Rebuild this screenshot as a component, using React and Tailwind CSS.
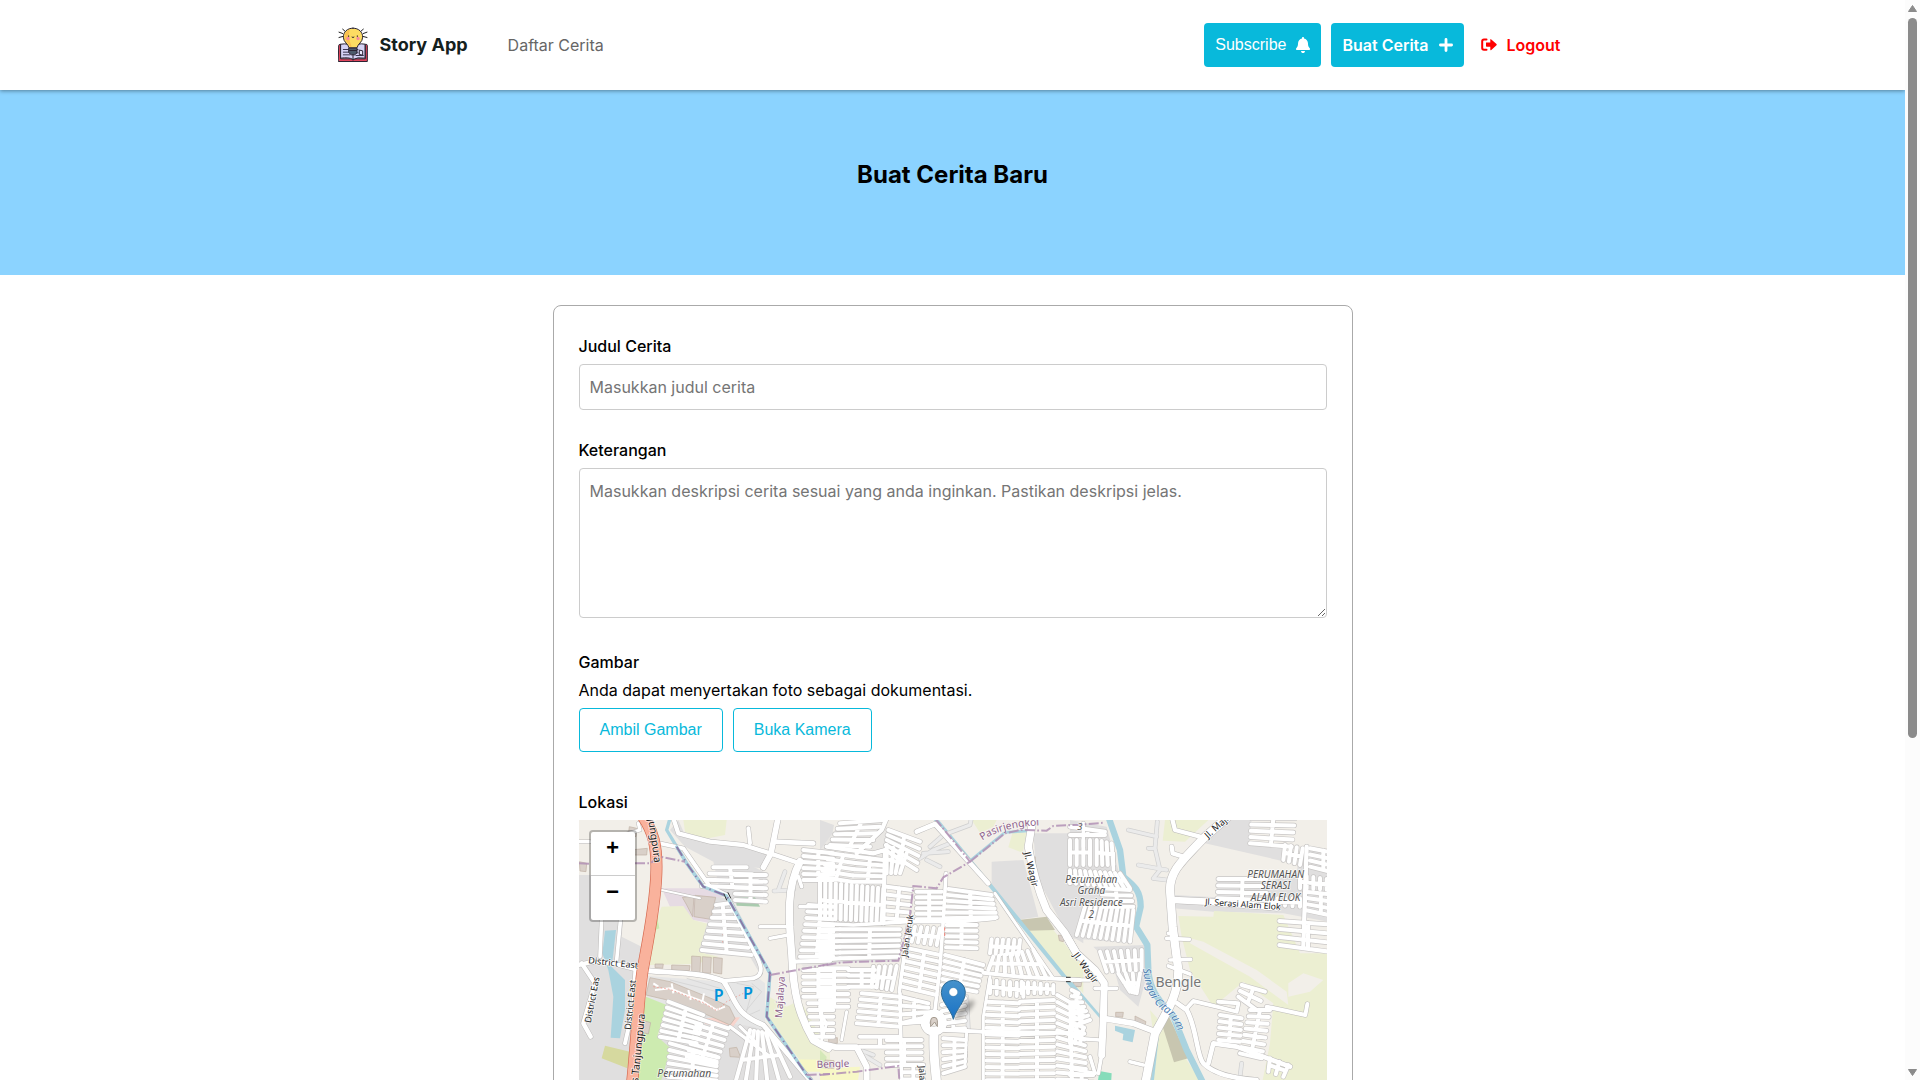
import React from "react";
import { FaBell } from "react-icons/fa6";

const INTER = "font-['Inter','Liberation_Sans',sans-serif]";
const ARIAL = "font-['Liberation_Sans',Arial,sans-serif]";

/* Map data. A block is [x1,y1, x2,y2, x3,y3, x4,y4, n]: n parallel streets
   running from the edge 1-2 to the edge 4-3, with a spine across the middle. */
const SECTIONS = [
  {
    ox: -27,
    areas: [
      ["#e0dfdf", "27,195 170,195 155,380 215,410 195,840 27,840"],
      ["#e0dfdf", "325,30 345,75 540,105 595,140 575,175 480,165 430,155 345,110 300,60"],
      ["#ecefd2", "340,30 470,30 465,75 400,88 345,65"],
      ["#e0dfdf", "430,155 530,160 590,190 590,280 500,285 450,240"],
      ["#e6dbe3", "275,235 400,235 465,255 435,275 425,340 370,330 330,290 300,290"],
      ["#ecefd2", "275,290 340,288 370,330 425,345 385,425 445,440 380,462 238,465 258,330"],
      ["#cdebb0", "262,325 268,355 252,362 256,330"],
      ["#e0dfdf", "435,262 485,265 575,440 575,500 540,440 410,432 388,420"],
      ["#e6e6e6", "235,498 460,515 560,500 585,520 585,640 700,790 720,840 470,840 480,650 300,640 230,560"],
      ["#e0dfdf", "290,565 480,640 550,650 600,670 720,800 720,900 260,900 270,680"],
      ["#cdebb0", "228,560 290,585 262,680 302,715 268,830 180,830 205,680"],
      ["#d6d99f", "105,707 180,725 172,775 95,745"],
      ["#ecefd2", "598,560 650,590 690,570 780,730 780,750 690,750 590,630"],
      ["#f7f7c6", "680,748 790,750 790,785 700,785"],
      ["#f8d4cc", "398,625 510,622 485,655 405,642"],
      ["#aacbaf", "497,263 555,262 570,290 500,287"],
      ["#aad3df", "105,362 138,360 130,430 125,470 165,510 165,600 150,685 122,683 130,560 115,480 97,430"],
      ["#e9e7e4", "700,120 790,130 790,470 700,470 660,420 665,250"],
    ],
    buildings: [
      "337,262 372,258 368,320 350,285",
      "375,256 437,262 422,328 372,320",
      "365,438 392,440 390,490 365,486",
      "397,440 424,442 422,490 397,488",
      "430,442 457,445 455,492 430,488",
      "305,465 360,467 358,482 305,480",
      "255,462 280,462 278,475 255,473",
      "240,503 300,515 440,572 478,590 495,625 480,645 420,618 300,572 228,555",
      "215,630 242,638 235,672 213,666",
      "178,50 200,55 198,80 175,75",
      "28,155 50,160 48,185 30,183",
      "180,120 232,115 230,135 185,135",
      "478,715 500,712 512,742 480,740",
    ],
    canals: [["M300,25 L290,60 320,110 350,160 400,230 470,255 600,490 590,620 710,795 760,850", 10]],
    roads: [
      ["M310,25 L325,70 420,95 520,105 600,130 690,160", 13],
      ["M625,20 L603,130 580,172", 17],
      ["M610,95 L730,100", 14],
      ["M540,100 L535,55", 12],
      ["M690,155 C650,230 655,320 665,430 C670,560 690,620 730,690 L775,715", 22],
      ["M232,482 C330,490 400,488 460,513 C500,570 490,610 580,645 L720,810", 15],
      ["M460,513 L550,505 C585,495 575,465 550,420 L470,255 420,230 385,180 340,115 270,100", 12],
      ["M27,95 L60,95", 10], ["M160,75 L210,60 205,40", 10],
      ["M95,325 L90,440", 11], ["M152,325 L140,450", 11],
      ["M27,465 L70,455 130,460 200,478", 13],
      ["M35,460 L75,520 40,640 62,680", 13],
      ["M196,480 L190,590 165,700", 12],
      ["M275,240 L390,265", 6],
      ["M570,350 L665,350 M600,385 L655,375", 10],
      ["M670,455 L780,452", 13],
      ["M695,230 L685,200 M690,290 L740,290", 11],
      ["M480,650 L600,740 M510,650 L560,700", 10],
    ],
    grayRoads: ["M612,243 L670,240 M625,240 L645,185"],
    blocks: [
      [430, 172, 395, 228, 580, 235, 530, 172, 4],
      [495, 195, 495, 270, 588, 275, 588, 195, 5],
      [438, 285, 395, 420, 545, 435, 478, 280, 8],
      [295, 575, 270, 680, 380, 700, 400, 615, 7],
      [385, 625, 350, 740, 440, 760, 475, 655, 7],
      [300, 700, 290, 840, 440, 840, 440, 740, 8],
      [600, 670, 540, 660, 490, 840, 660, 800, 6],
      [700, 120, 700, 210, 790, 210, 790, 130, 6],
      [715, 285, 690, 440, 790, 440, 790, 290, 9],
      [700, 480, 700, 560, 790, 560, 790, 480, 5],
      [715, 580, 725, 680, 790, 680, 790, 580, 6],
    ],
  },
  {
    ox: 723,
    areas: [
      ["#e0dfdf", "0,30 42,45 30,110 0,120"],
      ["#e9e7e4", "60,40 200,30 200,340 0,340 0,120"],
      ["#ecefd2", "455,30 530,30 520,50 480,68"],
      ["#ecefd2", "580,60 620,70 608,128 565,112"],
      ["#e0dfdf", "515,155 610,150 655,320 590,330 515,240"],
      ["#e0dfdf", "640,70 790,70 790,400 740,370 650,200"],
      ["#ecefd2", "600,345 700,360 790,470 790,550 740,500"],
      ["#c8c6b0", "595,330 680,320 705,360 622,362"],
      ["#e0dfdf", "0,350 230,350 230,455 0,460"],
      ["#f7f7c6", "0,775 120,770 110,840 0,840"],
      ["#d4e8b8", "0,720 20,740 15,775 0,775"],
    ],
    buildings: [
      "26,683 52,683 52,700 26,700",
      "15,750 42,752 42,775 15,775",
      "760,515 778,518 778,530 765,530",
      "645,140 650,200 640,190",
      "715,375 735,380 730,395 718,392",
    ],
    canals: [
      ["M345,25 L510,225 790,570", 12],
      ["M450,152 L555,67 640,62", 8],
    ],
    roads: [
      ["M290,65 L345,42 505,220", 14],
      ["M640,20 L625,110 C635,170 650,230 680,300 L735,370 775,440", 22],
      ["M267,330 L238,545", 11],
      ["M378,190 L370,330 360,470 345,600", 11],
      ["M525,250 L700,505", 9],
      ["M490,488 L600,500 780,510", 12],
      ["M510,500 L490,620 490,810", 9],
      ["M0,340 L100,345 265,335 420,335 525,325", 11],
      ["M110,130 L185,60 200,25 M20,110 L160,130 195,120 190,340", 13],
      ["M0,700 L50,712 110,712 140,770 140,830", 18],
      ["M250,640 L310,635 M375,660 L490,665 790,670", 12],
      ["M342,612 a26,26 0 1 1 -1,0 M342,665 C340,720 342,740 352,840", 27],
      ["M440,665 L435,765 M80,605 L65,690 M0,610 L20,640 5,690", 9],
      ["M240,550 L245,830", 11],
    ],
    grayRoads: [
      "M300,145 L340,120 390,100 M310,130 L385,125 M320,150 L360,170 M370,75 L450,45 455,20 M330,110 L370,75",
      "M130,735 L180,765 M120,720 L160,735",
      "M440,560 L445,660",
    ],
    blocks: [
      [385, 237, 375, 325, 530, 322, 515, 255, 6],
      [290, 245, 290, 328, 365, 328, 365, 245, 6],
      [60, 40, 30, 105, 150, 110, 190, 30, 5],
      [30, 130, 0, 200, 95, 215, 110, 140, 5],
      [110, 140, 95, 215, 190, 215, 190, 150, 5],
      [0, 215, 190, 235, 185, 335, 0, 325, 13],
      [205, 60, 195, 120, 290, 180, 300, 95, 5],
      [200, 105, 260, 130, 240, 190, 200, 190, 4],
      [200, 230, 195, 325, 265, 330, 275, 240, 5],
      [0, 358, 0, 450, 60, 445, 60, 358, 6],
      [60, 358, 60, 445, 235, 440, 240, 358, 6],
      [0, 475, 0, 590, 85, 590, 85, 475, 7],
      [85, 480, 85, 530, 165, 530, 165, 480, 4],
      [160, 470, 230, 468, 215, 540, 155, 530, 5],
      [285, 350, 360, 355, 350, 405, 275, 395, 5],
      [265, 415, 245, 530, 350, 555, 360, 435, 7],
      [380, 345, 378, 412, 470, 415, 470, 345, 5],
      [375, 435, 365, 525, 470, 545, 490, 465, 6],
      [515, 388, 600, 390, 595, 435, 510, 430, 6],
      [520, 440, 640, 420, 680, 505, 505, 480, 8],
      [510, 510, 610, 520, 610, 560, 510, 550, 6],
      [605, 515, 700, 525, 700, 550, 605, 550, 6],
      [500, 575, 500, 830, 595, 830, 597, 580, 14],
      [600, 575, 600, 830, 702, 830, 702, 570, 14],
      [712, 555, 712, 830, 800, 830, 790, 600, 14],
      [365, 585, 365, 660, 435, 655, 435, 565, 5],
      [370, 685, 370, 790, 435, 770, 437, 690, 6],
      [125, 550, 110, 640, 240, 650, 240, 560, 6],
      [240, 560, 240, 640, 325, 620, 325, 580, 4],
      [120, 680, 120, 710, 240, 710, 240, 680, 2],
      [200, 690, 200, 765, 305, 765, 305, 690, 5],
      [250, 765, 250, 830, 310, 830, 310, 765, 4],
    ],
  },
  {
    ox: 1473,
    areas: [
      ["#e0dfdf", "0,30 110,50 150,200 190,260 185,400 0,385"],
      ["#ecefd2", "285,30 415,30 345,95 278,92"],
      ["#e0dfdf", "475,30 545,30 540,95 640,110 690,165 405,100"],
      ["#e0dfdf", "440,205 590,215 680,190 690,110 800,130 800,340 640,310 430,305 310,295 310,255 440,262"],
      ["#ecefd2", "325,318 430,320 432,303 640,315 690,430 800,430 800,900 560,900 600,700 610,580 520,515 430,590 360,480 335,380"],
      ["#f2efe9", "360,385 400,395 560,480 650,545 655,585 540,500 360,400"],
      ["#f2efe9", "655,520 700,490 760,510 720,545 655,560"],
      ["#ecefd2", "240,600 275,640 350,750 410,840 240,840 250,670"],
      ["#ecefd2", "0,430 30,500 0,515"],
      ["#c8c6b0", "295,615 355,745 312,757 278,650"],
      ["#e0dfdf", "70,410 225,405 235,480 205,590 150,540 130,470"],
      ["#86dcba", "88,783 125,790 122,840 80,840"],
      ["#aad3df", "135,647 170,655 195,660 188,697 158,690 160,672 135,662"],
    ],
    buildings: [
      "137,607 160,607 158,622 137,620",
      "195,618 228,635 225,645 195,635",
      "10,515 35,517 33,530 12,528",
    ],
    canals: [
      ["M115,20 L150,120 160,200 C190,225 212,240 212,290 L198,350 232,405 235,480 C240,560 290,590 310,620 L350,720 405,830", 19],
      ["M0,515 L92,622", 8],
      ["M262,680 L245,830", 9],
    ],
    roads: [
      ["M480,15 L400,85 C340,150 300,180 300,240 L308,350 325,480 C325,550 300,590 255,670 L222,840", 25],
      ["M305,20 L315,60 390,80 M340,140 L308,130 305,110", 13],
      ["M310,270 L410,275 620,292", 20],
      ["M290,385 L358,388 M300,450 L362,448 M295,468 L360,492 M295,370 L310,370", 11],
      ["M322,580 L350,600 C380,650 380,740 400,760 C430,790 480,805 560,810", 14],
      ["M350,595 L370,573 440,590 500,605 505,580 445,575", 12],
      ["M590,590 L706,615 712,582", 12],
      ["M415,760 L430,700 500,710 660,770", 14],
      ["M-10,380 L20,430 75,480 103,520 100,625 95,735", 21],
      ["M100,625 L190,640 255,665", 17],
      ["M75,535 L140,535 M20,685 L90,690 M95,735 L85,790 M60,740 L75,790 M180,755 L220,765", 11],
      ["M0,775 L75,790 M0,510 L60,510", 10],
      ["M710,110 L700,410", 13],
      ["M40,40 L40,110 M130,130 L130,180", 11],
    ],
    grayRoads: [
      "M175,60 L260,80 M262,35 L255,115 235,115 M205,165 L290,180 M255,115 L270,180 250,205 290,210",
      "M515,760 L510,800",
    ],
    blocks: [
      [0, 50, 0, 75, 105, 75, 105, 65, 2],
      [0, 90, 60, 90, 60, 165, 0, 165, 4],
      [80, 90, 125, 100, 130, 165, 80, 165, 4],
      [0, 180, 150, 190, 180, 235, 0, 220, 11],
      [95, 235, 95, 290, 190, 290, 180, 240, 4],
      [45, 290, 190, 300, 180, 395, 20, 375, 10],
      [445, 207, 442, 265, 590, 270, 590, 207, 4],
      [545, 25, 540, 100, 665, 110, 675, 25, 5],
      [645, 105, 698, 115, 690, 165, 640, 150, 4],
      [720, 115, 720, 170, 800, 190, 800, 130, 4],
      [690, 195, 790, 210, 790, 240, 690, 235, 6],
      [705, 245, 705, 300, 800, 320, 800, 255, 4],
      [628, 333, 628, 405, 800, 428, 800, 345, 4],
      [600, 265, 690, 265, 690, 290, 600, 285, 5],
      [90, 425, 215, 420, 215, 480, 110, 485, 7],
      [145, 490, 210, 490, 200, 550, 180, 545, 4],
      [5, 540, 5, 650, 60, 630, 25, 550, 7],
      [515, 525, 505, 560, 560, 600, 585, 545, 3],
      [450, 615, 445, 690, 510, 695, 515, 625, 5],
      [540, 600, 510, 730, 575, 745, 600, 600, 8],
      [600, 745, 655, 765, 640, 800, 595, 785, 3],
      [0, 650, 40, 655, 30, 700, 0, 700, 3],
      [0, 795, 0, 840, 70, 840, 70, 795, 3],
    ],
  },
];

function blockPath([x1, y1, x2, y2, x3, y3, x4, y4, n]) {
  let d = "";
  for (let i = 0; i < n; i++) {
    const t = i / (n - 1);
    const ax = x1 + (x2 - x1) * t;
    const ay = y1 + (y2 - y1) * t;
    const bx = x4 + (x3 - x4) * t;
    const by = y4 + (y3 - y4) * t;
    d += `M${ax.toFixed(1)},${ay.toFixed(1)}L${bx.toFixed(1)},${by.toFixed(1)}`;
  }
  const mx = (x1 + x4) / 2;
  const my = (y1 + y4) / 2;
  const nx = (x2 + x3) / 2;
  const ny = (y2 + y3) / 2;
  return d + `M${mx},${my}L${nx},${ny}`;
}

function Layer({ children }) {
  return SECTIONS.map((s) => (
    <g key={s.ox} transform={`translate(${s.ox} -30)`}>
      {children(s)}
    </g>
  ));
}

function Label({ x, y, r = 0, size = 26, fill = "#222", italic, anchor = "start", children }) {
  return (
    <text
      transform={`translate(${x} ${y}) rotate(${r})`}
      fontSize={size}
      fill={fill}
      fontStyle={italic ? "italic" : "normal"}
      textAnchor={anchor}
      stroke="#fff"
      strokeOpacity="0.7"
      strokeWidth="5"
      paintOrder="stroke"
      strokeLinejoin="round"
    >
      {children}
    </text>
  );
}

const HIGHWAY = "M212,10 C250,60 262,110 259,190 C256,290 232,400 218,480 C205,560 200,700 182,860";
const BORDERS = [
  [-27, "M27,160 L100,163 M195,160 L240,160 270,140 345,155"],
  [-27, "M600,495 L680,480 780,462 M710,795 L780,792"],
  [723, "M345,25 L450,155 370,202 350,235 280,228 268,330 235,452 120,455 60,458 0,468"],
  [723, "M450,155 L555,70 600,60 680,62 700,48 780,44 855,38"],
  [723, "M0,795 L110,785 235,768 240,840"],
];

function StreetMap() {
  return (
    <svg
      role="img"
      aria-label="Peta lokasi"
      viewBox="0 0 2244 1200"
      preserveAspectRatio="xMidYMid slice"
      className="block h-full w-full font-['Noto_Sans',sans-serif]"
    >
      <defs>
        <linearGradient id="pin" x1="0" y1="0" x2="0" y2="1">
          <stop offset="0" stopColor="#4592cc" />
          <stop offset="1" stopColor="#1a72c4" />
        </linearGradient>
        <filter id="soft" x="-50%" y="-50%" width="200%" height="200%">
          <feGaussianBlur stdDeviation="7" />
        </filter>
        <path id="river-name" d="M1692,446 C1697,500 1715,550 1760,578 C1790,600 1798,630 1815,700" />
        <path id="village-name" d="M1210,62 C1250,35 1300,20 1380,16" />
      </defs>
      <rect width="2244" height="1200" fill="#f2efe9" />
      <Layer>{(s) => s.areas.map(([f, p], i) => <polygon key={i} points={p} fill={f} />)}</Layer>
      <Layer>
        {(s) => s.buildings.map((p, i) => <polygon key={i} points={p} fill="#d9d0c9" stroke="#c0b0a3" strokeWidth="2" />)}
      </Layer>
      <g transform="translate(-27 -30)" fill="none">
        <path d="M250,520 L265,530 M255,540 L300,535 360,560 400,575 440,600 465,590 M305,520 L310,550 M355,540 L362,570 M402,550 L396,580" stroke="#fff" strokeWidth="6" />
        <path d="M250,530 L300,538 360,562 400,578 440,602 470,575 520,550 M458,360 L458,405" stroke="#f3877c" strokeWidth="2" strokeDasharray="5 6" />
        <path d="M300,510 L440,545 M350,505 L450,535 M500,520 L550,530 525,620 570,600 M545,520 L575,545 530,600" stroke="#cfcfcf" strokeWidth="2" />
      </g>
      <Layer>
        {(s) => s.canals.map(([d, w], i) => <path key={i} d={d} fill="none" stroke="#aad3df" strokeWidth={w} strokeLinejoin="round" />)}
      </Layer>
      <g fill="none" strokeLinecap="round" strokeLinejoin="round">
        <Layer>
          {(s) => (
            <>
              {(s.grayRoads || []).map((d, i) => <path key={i} d={d} stroke="#cfcfcf" strokeWidth="14" />)}
              {(s.grayRoads || []).map((d, i) => <path key={`f${i}`} d={d} stroke="#ebebeb" strokeWidth="10" />)}
            </>
          )}
        </Layer>
        <Layer>{(s) => s.blocks.map((b, i) => <path key={i} d={blockPath(b)} stroke="#c8c6c5" strokeWidth="16" />)}</Layer>
        <Layer>{(s) => s.roads.map(([d, w], i) => <path key={i} d={d} stroke="#bbb9b8" strokeWidth={w + 3} />)}</Layer>
        <Layer>{(s) => s.blocks.map((b, i) => <path key={i} d={blockPath(b)} stroke="#fff" strokeWidth="12" />)}</Layer>
        <Layer>{(s) => s.roads.map(([d, w], i) => <path key={i} d={d} stroke="#fff" strokeWidth={w} />)}</Layer>
        <g transform="translate(-27 -30)">
          <path d={HIGHWAY} stroke="#d5694f" strokeWidth="36" />
          <path d={HIGHWAY} stroke="#f9b29c" strokeWidth="32" />
          <path d="M320,110 L350,160 400,230 470,258 600,490 590,620 710,795 760,850" stroke="#aad3df" strokeWidth="9" />
          <path d="M320,110 L350,160 400,230 470,258 600,490 590,620 710,795 760,850" stroke="#8a7ba8" strokeWidth="6" strokeDasharray="32 12 4 12" strokeLinecap="butt" />
          <path d="M462,252 L470,270 M474,248 L482,264" stroke="#333" strokeWidth="3" />
        </g>
      </g>
      <g fill="none" stroke="#b191b5" strokeOpacity="0.85" strokeWidth="6" strokeDasharray="30 7 5 7">
        {BORDERS.map(([ox, d], i) => <path key={i} transform={`translate(${ox} -30)`} d={d} />)}
      </g>
      <g transform="translate(723 -30)">
        <path d="M332,650 V632 a10,10 0 0 1 20,0 V650 l-8,-14 Z" fill="#d9d0c9" stroke="#a59b90" strokeWidth="3" />
        <path d="M374,352 V362 M374,368 V378" stroke="#f3877c" strokeWidth="3" />
        <path d="M738,502 H752 M738,515 H752" stroke="#333" strokeWidth="3" />
      </g>

      <g transform="translate(-27 -30)">
        <Label x={232} y={8} r={82} size={31}>njungpura</Label>
        <Label x={204} y={818} r={-84} size={31}>s Tanjungpura</Label>
        <Label x={54} y={460} r={6} size={27}>District East</Label>
        <Label x={62} y={640} r={-79} size={27}>District Eas</Label>
        <Label x={182} y={660} r={-84} size={27}>District East</Label>
        <Label x={262} y={802} size={31} italic fill="#555">Perumahan</Label>
        <Label x={636} y={625} r={-86} size={30} fill="#8d618b">Majalaya</Label>
        <text x="431" y="573" fontSize="48" fontWeight="600" fill="#0092da">P</text>
        <text x="519" y="567" fontSize="48" fontWeight="600" fill="#0092da">P</text>
      </g>
      <g transform="translate(723 -30)">
        <Label x={612} y={128} r={77} size={28}>Jl. Wagir</Label>
        <Label x={262} y={442} r={-82}>Jalan Jeruk</Label>
        <Label x={296} y={768} r={86}>Jalan Jeruk</Label>
        <Label x={-10} y={774} r={-2} size={30} fill="#8d618b">Bengle</Label>
      </g>
      <g transform="translate(1473 -30)">
        <Label x={64} y={218} size={30} italic fill="#555" anchor="middle">Perumahan</Label>
        <Label x={64} y={253} size={30} italic fill="#555" anchor="middle">Graha</Label>
        <Label x={64} y={289} size={30} italic fill="#555" anchor="middle">Asri Residence</Label>
        <Label x={64} y={325} size={30} italic fill="#555" anchor="middle">2</Label>
        <Label x={617} y={203} size={30} italic fill="#555" anchor="middle">PERUMAHAN</Label>
        <Label x={617} y={238} size={30} italic fill="#555" anchor="middle">SERASI</Label>
        <Label x={617} y={274} size={30} italic fill="#555" anchor="middle">ALAM ELOK</Label>
        <Label x={325} y={532} size={42} fill="#777" anchor="middle">Bengle</Label>
        <Label x={405} y={284} r={4}>Jl. Serasi Alam Elok</Label>
        <Label x={414} y={86} r={-42} size={28}>Jl. Maja</Label>
        <Label x={8} y={436} r={54} size={28}>Jl. Wagir</Label>
        <Label x={22} y={60} size={28} italic fill="#555">3</Label>
      </g>
      <g stroke="#fff" strokeOpacity="0.6" strokeWidth="4" paintOrder="stroke">
        <text fontSize="31" fill="#8d618b">
          <textPath href="#village-name">Pasirjengkol</textPath>
        </text>
        <text fontSize="32" fontStyle="italic" fill="#4d80b3">
          <textPath href="#river-name">Sungai Citarum</textPath>
        </text>
      </g>

      <g transform="translate(1123 598)">
        <ellipse cx="34" cy="-30" rx="38" ry="12" transform="rotate(-42 34 -30)" fill="#000" fillOpacity="0.32" filter="url(#soft)" />
        <path d="M0,0 C-8,-32 -36,-52 -36,-81 A36,36 0 0 1 36,-81 C36,-52 8,-32 0,0 Z" fill="url(#pin)" stroke="#2e6c97" strokeWidth="3" />
        <circle cy="-82" r="13" fill="#fff" stroke="#2e6c97" strokeWidth="1" />
      </g>
    </svg>
  );
}

function Logo() {
  return (
    <svg viewBox="0 0 90 105" className="h-9 w-[30px]" aria-hidden="true" fill="none" strokeLinecap="round" strokeLinejoin="round">
      <path d="M14,5 L20,10 M3,14 L14,18 M3,30 L14,27 M76,5 L70,10 M87,14 L76,18 M87,30 L76,27" stroke="#222" strokeWidth="3" />
      <path d="M2,54 Q2,50 8,50 V94 H82 V50 Q88,50 88,54 V102 H2 Z" fill="#e0445c" stroke="#2b2433" strokeWidth="3" />
      <path d="M9,50 Q32,46 45,58 Q58,46 81,50 V92 Q58,88 45,96 Q32,88 9,92 Z" fill="#d5d3f5" stroke="#2b2433" strokeWidth="3" />
      <path d="M16,66 H30 M16,74 H34 M16,82 H36 M56,66 H60 M54,76 H60 M54,84 H76" stroke="#3b3650" strokeWidth="3" />
      <path d="M65,68 L74,70 V83 L65,81 Z" fill="#eeedff" stroke="#2b2433" strokeWidth="3" />
      <path d="M45,2 C27,2 16,14 16,29 C16,44 31,49 33,61 H57 C59,49 74,44 74,29 C74,14 63,2 45,2 Z" fill="#fddc62" stroke="#2b2433" strokeWidth="3" />
      <path d="M36,6 C24,10 19,20 20,31 C22,42 33,48 36,58 H41 C38,44 27,30 36,6 Z" fill="#fbc04f" />
      <circle cx="30" cy="33" r="5" fill="#f68aa0" />
      <circle cx="60" cy="33" r="5" fill="#f68aa0" />
      <path d="M32,25 V27 M58,25 V27 M42,29 Q45,32 48,29" stroke="#2b2433" strokeWidth="3" />
      <path d="M33,62 H57 V76 L50,82 H40 L33,76 Z" fill="#4c5a6b" stroke="#2b2433" strokeWidth="3" />
      <path d="M34,69 H56 M45,82 V98" stroke="#2b2433" strokeWidth="3" />
    </svg>
  );
}

function PlusIcon() {
  return (
    <svg viewBox="0 0 14 14" className="h-[14px] w-[14px]" aria-hidden="true">
      <path d="M7,1.4 V12.6 M1.4,7 H12.6" stroke="currentColor" strokeWidth="2.8" strokeLinecap="round" />
    </svg>
  );
}

function LogoutIcon() {
  return (
    <svg viewBox="0 0 16 14" className="h-[14px] w-4" aria-hidden="true">
      <path d="M5.5,1.5 H3 Q1.2,1.5 1.2,3.3 V10 Q1.2,11.8 3,11.8 H5.5" fill="none" stroke="currentColor" strokeWidth="2" strokeLinecap="round" />
      <path d="M5,4.6 H9.3 V1.9 Q9.3,0.6 10.3,1.4 L15.5,6 Q16,6.6 15.5,7.2 L10.3,11.9 Q9.3,12.6 9.3,11.4 V8.7 H5.6 Q5,8.7 5,8 Z" fill="currentColor" />
    </svg>
  );
}

function ScrollRail() {
  return (
    <div aria-hidden="true" className="flex w-[15px] shrink-0 flex-col items-center bg-[#fcfcfc]">
      <svg viewBox="0 0 9 18" className="h-[18px] w-[9px] shrink-0">
        <path d="M4.5,5.5 L8.5,11.5 H0.5 Z" fill="#8b8b8b" stroke="#8b8b8b" strokeLinejoin="round" />
      </svg>
      <div className="min-h-0 w-full flex-1">
        <div className="mx-auto h-[69%] w-[9px] rounded-full bg-[#8b8b8b]" />
      </div>
      <svg viewBox="0 0 9 18" className="h-[18px] w-[9px] shrink-0">
        <path d="M4.5,13.5 L8.5,7.5 H0.5 Z" fill="#8b8b8b" stroke="#8b8b8b" strokeLinejoin="round" />
      </svg>
    </div>
  );
}

const FIELD = "block w-full rounded border border-[#ccc] px-[10px] placeholder:text-[#757575] placeholder:opacity-100";
const LABEL = "block font-medium";
const OUTLINE = "h-11 rounded border border-[#08b9db] px-5 text-[#08b9db]";

export default function App() {
  return (
    <div className={`flex h-screen bg-white text-base leading-5 text-black ${INTER}`}>
      <div className="min-w-0 flex-1 overflow-y-auto [scrollbar-width:none]">
        <header className="relative z-10 bg-white shadow-[0_1px_4px_rgba(0,0,0,0.4)]">
          <div className="mx-auto flex h-[90px] max-w-[1230px] items-center">
            <a href="#/" className="flex items-center gap-3 text-lg font-bold text-[#14201d]">
              <Logo />
              Story App
            </a>
            <nav className="ml-10">
              <a href="#/" className="text-[#666]">Daftar Cerita</a>
            </nav>
            <div className="ml-auto flex items-center gap-[10px]">
              <button type="button" className={`flex h-11 items-center gap-[10px] rounded bg-[#08b9db] px-[11px] text-white ${ARIAL}`}>
                Subscribe
                <FaBell className="w-[14px]" aria-hidden="true" />
              </button>
              <a href="#/new" className="flex h-11 items-center gap-[10px] rounded bg-[#08b9db] px-[11px] font-semibold text-white">
                Buat Cerita
                <PlusIcon />
              </a>
              <a href="#/logout" className="flex items-center gap-[10px] px-[7px] font-semibold text-[#f00]">
                <LogoutIcon />
                Logout
              </a>
            </div>
          </div>
        </header>

        <main>
          <section className="bg-[#8bd3ff] pt-[70px] pb-[85px] text-center">
            <h1 className="text-2xl leading-[30px] font-bold">Buat Cerita Baru</h1>
          </section>

          <form className="mx-auto mt-[30px] mb-10 max-w-[800px] rounded-lg border border-[#aaa] px-[25px] py-[30px]">
            <div className="mb-[30px]">
              <label htmlFor="title" className={LABEL}>Judul Cerita</label>
              <input id="title" type="text" placeholder="Masukkan judul cerita" className={`${FIELD} mt-2 h-[46px]`} />
            </div>
            <div className="mb-[34px]">
              <label htmlFor="description" className={LABEL}>Keterangan</label>
              <textarea
                id="description"
                placeholder="Masukkan deskripsi cerita sesuai yang anda inginkan. Pastikan deskripsi jelas."
                className={`${FIELD} mt-2 h-[150px] resize-y py-3`}
              />
            </div>
            <fieldset className="mb-10">
              <legend className={LABEL}>Gambar</legend>
              <p className="mt-2">Anda dapat menyertakan foto sebagai dokumentasi.</p>
              <div className={`mt-2 flex gap-[10px] ${ARIAL}`}>
                <button type="button" className={OUTLINE}>Ambil Gambar</button>
                <button type="button" className={OUTLINE}>Buka Kamera</button>
              </div>
            </fieldset>
            <section aria-labelledby="location">
              <h2 id="location" className="font-medium">Lokasi</h2>
              <div className="relative mt-2 h-[400px] overflow-hidden bg-[#f2efe9]">
                <StreetMap />
                <div className="absolute top-[10px] left-[10px] flex w-12 flex-col rounded border-2 border-black/25 bg-white bg-clip-padding text-[22px] font-bold">
                  <button type="button" aria-label="Perbesar" className="h-11 border-b border-[#ccc] pb-2 font-['Liberation_Mono',monospace]">+</button>
                  <button type="button" aria-label="Perkecil" className="h-11 pb-2 font-['Liberation_Mono',monospace]">−</button>
                </div>
              </div>
            </section>
          </form>
        </main>
      </div>
      <ScrollRail />
    </div>
  );
}
